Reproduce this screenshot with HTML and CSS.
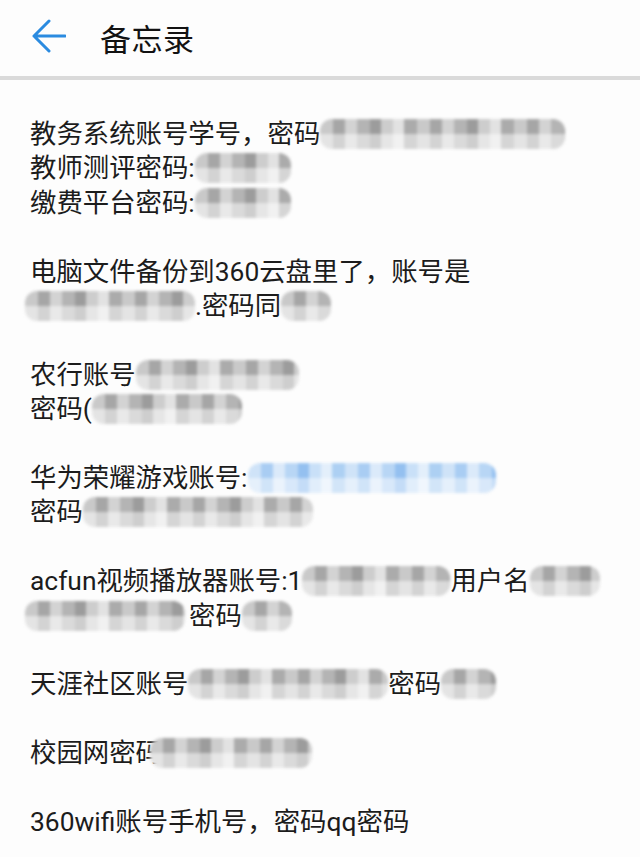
FILE: index.html
```html
<!DOCTYPE html>
<html lang="zh-CN">
<head>
<meta charset="utf-8">
<title>备忘录</title>
<link rel="stylesheet" href="styles.css">
</head>
<body>
<header class="bar">
  <svg class="back" width="34" height="34" viewBox="0 0 34 34" aria-hidden="true">
    <path d="M17 2 L2 17 L17 32 M2 17 H33" fill="none" stroke="#2b8be0" stroke-width="3" stroke-linecap="round" stroke-linejoin="round"/>
  </svg>
  <h1 class="title">备忘录</h1>
</header>
<main class="note">
  <p class="para">
    <span class="ln">教务系统账号学号，密码<span class="mz w245"></span></span>
    <span class="ln">教师测评密码:<span class="mz w96"></span></span>
    <span class="ln">缴费平台密码:<span class="mz w96"></span></span>
  </p>
  <p class="para">
    <span class="ln">电脑文件备份到360云盘里了，账号是</span>
    <span class="ln"><span class="mz w170 pull5"></span>.密码同<span class="mz w50"></span></span>
  </p>
  <p class="para">
    <span class="ln">农行账号<span class="mz w163"></span></span>
    <span class="ln">密码(<span class="mz w150"></span></span>
  </p>
  <p class="para">
    <span class="ln">华为荣耀游戏账号:<span class="mz blue w248"></span></span>
    <span class="ln">密码<span class="mz w230"></span></span>
  </p>
  <p class="para">
    <span class="ln">acfun视频播放器账号:1<span class="mz w148"></span>用户名<span class="mz w70"></span></span>
    <span class="ln"><span class="mz w160 pull5"></span><span class="gap">密码</span><span class="mz w50"></span></span>
  </p>
  <p class="para">
    <span class="ln">天涯社区账号<span class="mz w200"></span>密码<span class="mz w55"></span></span>
  </p>
  <p class="para">
    <span class="ln">校园网密码<span class="mz w162 pull12"></span></span>
  </p>
  <p class="para">
    <span class="ln">360wifi账号手机号，密码qq密码</span>
  </p>
</main>
</body>
</html>
```

FILE: styles.css
```css
html, body {
  margin: 0;
  padding: 0;
  background: #fdfdfd;
}
body {
  width: 640px;
  height: 857px;
  overflow: hidden;
  font-family: Roboto, "Noto Sans CJK SC", sans-serif;
  color: #1c1c1c;
}
.bar {
  height: 76px;
  display: flex;
  align-items: center;
  padding-left: 32px;
  border-bottom: 4px solid #dadada;
  box-sizing: content-box;
}
.back {
  display: block;
  margin-top: -4px;
}
.title {
  margin: -2px 0 0 34px;
  font-size: 31px;
  font-weight: 400;
  color: #121212;
  letter-spacing: 0.5px;
}
.note {
  padding: 37px 0 0 30px;
  font-size: 26.4px;
  line-height: 34.4px;
}
.para {
  margin: 0 0 34.4px;
}
.ln {
  display: block;
  white-space: nowrap;
}
.gap {
  margin-left: 4px;
}
.mz {
  display: inline-block;
  vertical-align: middle;
  height: 30px;
  margin-top: -4px;
  border-radius: 12px;
  filter: blur(1.6px);
  background:
    linear-gradient(to bottom, rgba(255,255,255,0) 50%, rgba(255,255,255,0.5) 50%),
    repeating-linear-gradient(90deg,
      #c9c9c9 0 13px, #a6a6a6 13px 25px, #d3d3d3 25px 37px,
      #b4b4b4 37px 50px, #9c9c9c 50px 61px, #cdcdcd 61px 73px,
      #e2e2e2 73px 84px, #ababab 84px 97px);
}
.mz.blue {
  background:
    linear-gradient(to bottom, rgba(255,255,255,0) 50%, rgba(255,255,255,0.45) 50%),
    repeating-linear-gradient(90deg,
      #cfe3f8 0 13px, #a9cdf3 13px 25px, #dbeafa 25px 37px,
      #b8d6f5 37px 50px, #94c0f0 50px 61px, #c9e0f8 61px 73px,
      #e3effb 73px 84px, #add0f3 84px 97px);
}
.pull5 { margin-left: -5px; }
.pull12 { margin-left: -12px; }
.w50 { width: 50px; }
.w55 { width: 55px; }
.w70 { width: 70px; }
.w96 { width: 96px; }
.w148 { width: 148px; }
.w150 { width: 150px; }
.w160 { width: 160px; }
.w162 { width: 162px; }
.w163 { width: 163px; }
.w170 { width: 170px; }
.w200 { width: 200px; }
.w230 { width: 230px; }
.w245 { width: 245px; }
.w248 { width: 248px; }
```
